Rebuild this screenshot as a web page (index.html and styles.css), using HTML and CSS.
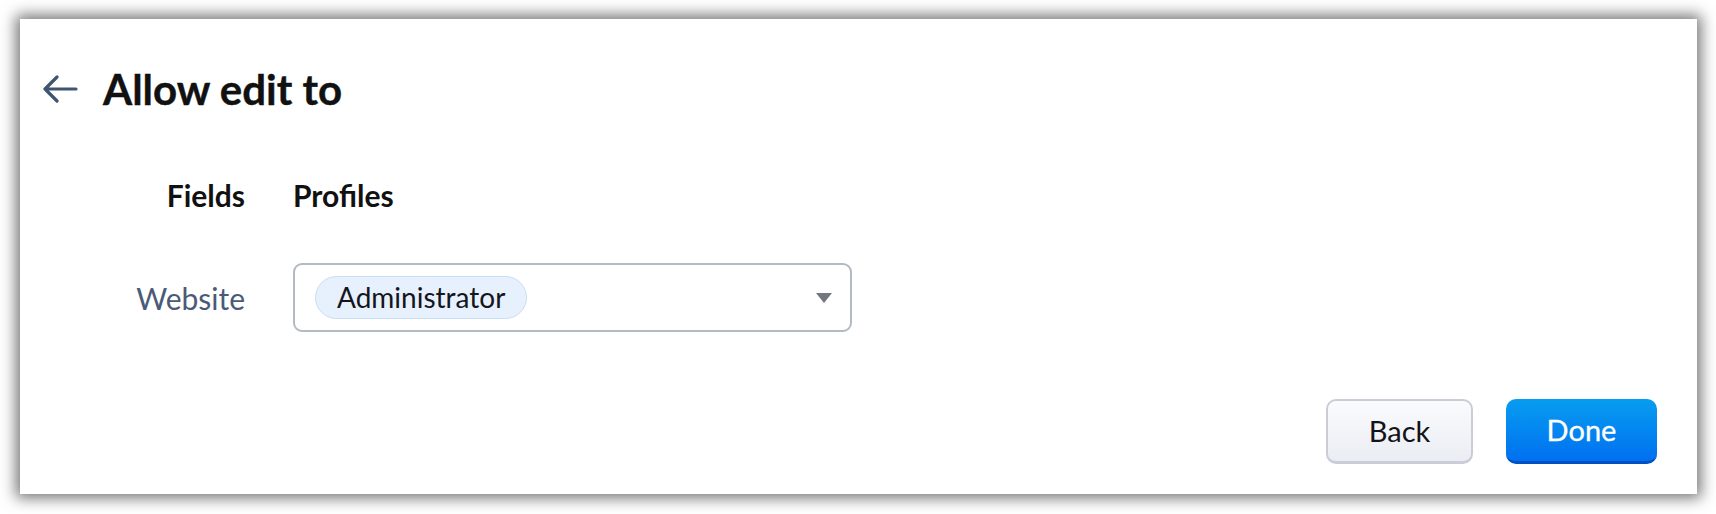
FILE: index.html
```html
<!DOCTYPE html>
<html lang="en">
<head>
    <meta charset="UTF-8">
    <meta name="viewport" content="width=device-width, initial-scale=1.0">
    <title>Allow edit to</title>
    <link rel="stylesheet" href="styles.css">
</head>
<body>
    <div class="card">
        <div class="header">
            <button class="back-link" type="button" aria-label="Back">
                <svg width="36" height="28" viewBox="0 0 36 28">
                    <path d="M34 14H3M15 2L3 14l12 12" fill="none" stroke="#3e5670" stroke-width="3.2" stroke-linecap="round" stroke-linejoin="round"/>
                </svg>
            </button>
            <h2>Allow edit to</h2>
        </div>

        <div class="perm-grid">
            <div class="col-head right">Fields</div>
            <div class="col-head">Profiles</div>

            <div class="field-name">Website</div>
            <div class="select">
                <span class="chip">Administrator</span>
                <span class="caret"></span>
            </div>
        </div>

        <div class="actions">
            <button class="btn btn-back" type="button">Back</button>
            <button class="btn btn-done" type="button">Done</button>
        </div>
    </div>
</body>
</html>
```

FILE: styles.css
```css
html, body { margin: 0; background: #fff; }
body { font-family: Lato, "Open Sans", sans-serif; padding: 19px 19px 20px 20px; }
.card { width: 1677px; height: 475px; box-sizing: border-box; background: #fff; box-shadow: 0 0 14px 4px rgba(0, 0, 0, 0.55); display: flex; flex-direction: column; padding: 52px 40px 30px 22px; }

.header { display: flex; align-items: center; gap: 25px; }
.back-link { background: none; border: none; padding: 0; display: flex; cursor: pointer; }
.header h2 { margin: 0; font-size: 42px; font-weight: 700; color: #111; line-height: 36px; -webkit-text-stroke: 0.4px #111; }

.perm-grid { display: grid; grid-template-columns: 203px 559px; column-gap: 48px; row-gap: 50px; margin-top: 70px; align-items: center; }
.col-head { font-size: 30px; font-weight: 700; color: #111; line-height: 36px; }
.right { text-align: right; }
.field-name { font-size: 30px; color: #4a5a78; text-align: right; }

.select { height: 69px; box-sizing: border-box; border: 2px solid #b3bac3; border-radius: 9px; display: flex; align-items: center; justify-content: space-between; padding: 0 18px 0 20px; }
.chip { height: 43px; box-sizing: border-box; display: flex; align-items: center; padding: 0 21px 2px 21px; border: 1.5px solid #c9ddf3; border-radius: 22px; background: #e7f1fd; font-size: 28px; color: #14161c; }
.caret { width: 0; height: 0; border-left: 8.5px solid transparent; border-right: 8.5px solid transparent; border-top: 10px solid #72767f; }

.actions { margin-top: auto; display: flex; justify-content: flex-end; gap: 33px; }
.btn { width: 147px; height: 65px; border-radius: 10px; font-family: Lato, sans-serif; font-size: 29px; cursor: pointer; padding: 0 0 2px; }
.btn-back { background: linear-gradient(#fafbfd, #eaedf3); border: 2px solid #cacdd8; border-bottom-width: 3px; color: #121419; }
.btn-done { width: 151px; background: linear-gradient(#079df0, #0070f0); border: none; border-bottom: 3px solid #0051c2; color: #fff; -webkit-text-stroke: 0.3px #fff; }
```
